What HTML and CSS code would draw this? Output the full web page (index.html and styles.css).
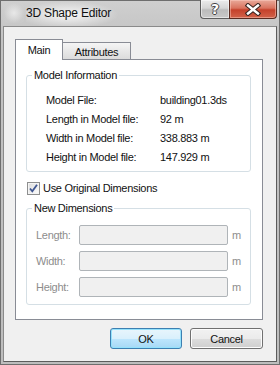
FILE: index.html
```html
<!DOCTYPE html>
<html lang="en">
<head>
    <meta charset="UTF-8">
    <meta name="viewport" content="width=device-width, initial-scale=1.0">
    <title>3D Shape Editor</title>
    <link rel="stylesheet" href="styles.css">
</head>
<body>

    <!-- Dialog window -->
    <div class="window">
        <div class="titlebar">
            <span class="app-icon"></span>
            <span class="title">3D Shape Editor</span>
            <div class="caption-buttons">
                <span class="cap-btn help">?</span>
                <span class="cap-btn close">
                    <svg width="16" height="13" viewBox="0 0 16 13">
                        <path d="M3 2.5 L13 10.5 M13 2.5 L3 10.5" stroke="#3b2520" stroke-width="4.6" stroke-linecap="square"/>
                        <path d="M3 2.5 L13 10.5 M13 2.5 L3 10.5" stroke="#fff" stroke-width="2.4" stroke-linecap="square"/>
                    </svg>
                </span>
            </div>
        </div>

        <div class="client">
            <!-- Tabs -->
            <div class="tabs">
                <span class="tab active">Main</span>
                <span class="tab">Attributes</span>
            </div>

            <div class="panel">
                <fieldset class="group">
                    <legend>Model Information</legend>
                    <div class="info-grid">
                        <span>Model File:</span><span>building01.3ds</span>
                        <span>Length in Model file:</span><span>92 m</span>
                        <span>Width in Model file:</span><span>338.883 m</span>
                        <span>Height in Model file:</span><span>147.929 m</span>
                    </div>
                </fieldset>

                <label class="check">
                    <span class="check-box">
                        <svg width="11" height="11" viewBox="0 0 11 11">
                            <path d="M2 5.5 L4.3 8.3 L9 1.8" fill="none" stroke="#3f5691" stroke-width="1.8"/>
                        </svg>
                    </span>
                    Use Original Dimensions
                </label>

                <fieldset class="group dims">
                    <legend>New Dimensions</legend>
                    <div class="dim-rows">
                        <div class="dim-row">
                            <span class="dim-label">Length:</span>
                            <span class="field"></span>
                            <span class="unit">m</span>
                        </div>
                        <div class="dim-row">
                            <span class="dim-label">Width:</span>
                            <span class="field"></span>
                            <span class="unit">m</span>
                        </div>
                        <div class="dim-row">
                            <span class="dim-label">Height:</span>
                            <span class="field"></span>
                            <span class="unit">m</span>
                        </div>
                    </div>
                </fieldset>
            </div>

            <!-- Dialog buttons -->
            <div class="buttons">
                <button class="btn default">OK</button>
                <button class="btn cancel">Cancel</button>
            </div>
        </div>
    </div>

</body>
</html>
```

FILE: styles.css
```css
/* Page */
body {
    margin: 0;
    background: #fff;
    font-family: "Liberation Sans", Arial, sans-serif;
    font-size: 11px;
    letter-spacing: -0.3px;
    color: #111;
}

/* Window frame */
.window {
    width: 280px;
    height: 365px;
    box-sizing: border-box;
    border: 1px solid #6e6e6e;
    padding: 0 2px 2px 2px;
    display: flex;
    flex-direction: column;
    background: linear-gradient(#cfcfcf, #c2c2c2 40px, #bdbdbd);
}

.titlebar {
    height: 25px;
    display: flex;
    align-items: flex-start;
    flex-shrink: 0;
}
.app-icon {
    width: 20px;
    height: 20px;
    margin: 2px 0 0 1px;
    border-radius: 4px;
    background: radial-gradient(circle at 50% 50%, rgba(235, 235, 235, 0.9), rgba(210, 210, 210, 0.2) 70%);
}
.title {
    margin-left: 2px;
    padding: 0 8px 0 0;
    line-height: 25px;
    font-size: 12px;
    letter-spacing: -0.2px;
    color: #111;
    background: radial-gradient(ellipse at 45% 55%, rgba(255, 255, 255, 0.85), rgba(255, 255, 255, 0) 70%);
}
.caption-buttons {
    margin-left: auto;
    margin-top: -1px;
    display: flex;
}
.cap-btn {
    height: 19px;
    box-sizing: border-box;
    display: flex;
    align-items: center;
    justify-content: center;
}
.help {
    width: 29px;
    border: 1px solid #5d5d5d;
    border-top: none;
    border-right: none;
    border-radius: 0 0 0 4px;
    background: linear-gradient(#ececec, #d6d6d6 45%, #bcbcbc 55%, #c9c9c9);
    box-shadow: inset 0 0 0 1px rgba(255, 255, 255, 0.5);
    color: #fff;
    font-family: "DejaVu Sans", sans-serif;
    font-weight: bold;
    font-size: 14px;
    letter-spacing: 0;
    text-shadow: 1px 0 0 #444, -1px 0 0 #444, 0 1px 0 #444, 0 -1px 0 #444;
}
.close {
    width: 48px;
    border: 1px solid #5a2a20;
    border-top: none;
    border-radius: 0 0 4px 0;
    background: linear-gradient(#e9a99a, #d9735f 45%, #c5412b 55%, #d2634a);
    box-shadow: inset 0 0 0 1px rgba(255, 210, 200, 0.45);
}
.close svg {
    display: block;
}

/* Client area */
.client {
    flex: 1;
    border: 1px solid;
    border-color: #8a8a8a #5c5c5c #5c5c5c #8a8a8a;
    background: #f0f0f0;
    padding: 12px 13px 0 11px;
}

/* Tabs */
.tabs {
    display: flex;
    align-items: flex-end;
    height: 20px;
}
.tab {
    box-sizing: border-box;
    border: 1px solid #898c95;
    border-bottom: none;
    text-align: center;
    line-height: 13px;
}
.tab.active {
    position: relative;
    z-index: 1;
    width: 48px;
    height: 21px;
    margin-bottom: -1px;
    padding-top: 4px;
    background: #fff;
}
.tab:not(.active) {
    width: 68px;
    height: 17px;
    border-left: none;
    padding-top: 3px;
    background: linear-gradient(#f5f5f5, #e8e8e8 50%, #dcdcdc);
}

.panel {
    height: 261px;
    box-sizing: border-box;
    border: 1px solid #898c95;
    background: #fff;
    padding: 9px 11px 0 10px;
}

/* Group boxes */
.group {
    margin: 0;
    padding: 0;
    min-width: 0;
    border: 1px solid #d5dfe5;
    border-radius: 3px;
}
.group legend {
    margin-left: 5px;
    padding: 0 2px;
    line-height: 13px;
}
.info-grid {
    display: grid;
    grid-template-columns: 114px auto;
    line-height: 19px;
    padding: 9px 0 4px 19px;
}

/* Checkbox */
.check {
    display: flex;
    align-items: center;
    gap: 3px;
    margin: 10px 0 0 1px;
    line-height: 13px;
}
.check-box {
    width: 13px;
    height: 13px;
    box-sizing: border-box;
    border: 1px solid #8e8f8f;
    background: linear-gradient(135deg, #dcdcdc, #fdfdfd);
    box-shadow: inset 0 0 0 1px #f4f4f4;
    display: flex;
    align-items: center;
    justify-content: center;
}
.check-box svg {
    display: block;
}

.dims {
    margin-top: 7px;
}
.dim-rows {
    display: flex;
    flex-direction: column;
    gap: 6px;
    padding: 10px 0 7px 9px;
}
.dim-row {
    display: flex;
    align-items: center;
    height: 20px;
    color: #8d8d8d;
}
.dim-label {
    width: 43px;
}
.field {
    width: 149px;
    height: 20px;
    box-sizing: border-box;
    border: 1px solid #afb4b8;
    border-radius: 2px;
    background: #f0f0f0;
}
.unit {
    margin-left: 4px;
}

/* Dialog buttons */
.buttons {
    display: flex;
    justify-content: flex-end;
    gap: 8px;
    margin-top: 8px;
}
.btn {
    height: 21px;
    padding: 0;
    border-radius: 3px;
    font-family: inherit;
    font-size: 11px;
    letter-spacing: -0.3px;
    color: #111;
}
.btn.default {
    width: 72px;
    border: 1px solid #3c7fb1;
    background: linear-gradient(#e8f5fc, #d9f0fc 50%, #bee6fd 50%, #a7d9f5);
    box-shadow: inset 0 0 0 1px #94e2fc;
}
.btn.cancel {
    width: 73px;
    border: 1px solid #707070;
    background: linear-gradient(#f2f2f2, #ebebeb 50%, #dddddd 50%, #cfcfcf);
    box-shadow: inset 0 0 0 1px #fcfcfc;
}
```
